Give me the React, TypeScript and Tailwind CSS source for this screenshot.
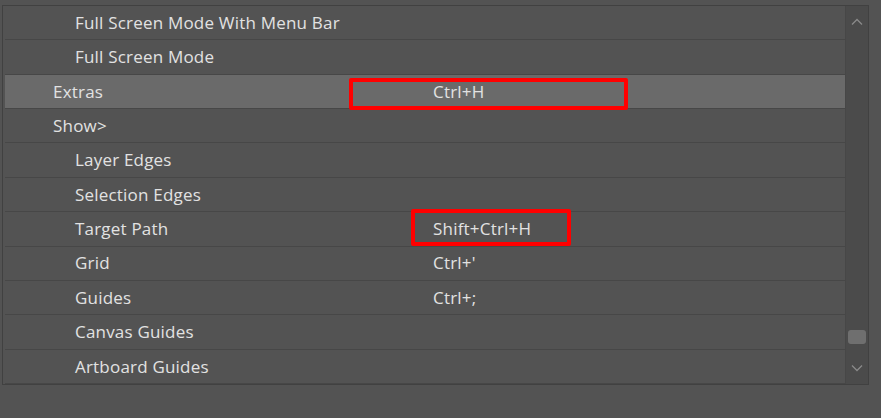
import React from 'react'

type Row = { label: string; shortcut?: string; level: 1 | 2; active?: boolean }

const rows: Row[] = [
    { label: 'Full Screen Mode With Menu Bar', level: 2 },
    { label: 'Full Screen Mode', level: 2 },
    { label: 'Extras', shortcut: 'Ctrl+H', level: 1, active: true },
    { label: 'Show>', level: 1 },
    { label: 'Layer Edges', level: 2 },
    { label: 'Selection Edges', level: 2 },
    { label: 'Target Path', shortcut: 'Shift+Ctrl+H', level: 2 },
    { label: 'Grid', shortcut: "Ctrl+'", level: 2 },
    { label: 'Guides', shortcut: 'Ctrl+;', level: 2 },
    { label: 'Canvas Guides', level: 2 },
    { label: 'Artboard Guides', level: 2 },
]

const App = () => {
    return (
        <div className="relative w-[881px] h-[418px] bg-[#535353] pt-[5px] pl-[2px] font-['Open_Sans',sans-serif] text-[17px] tracking-[0.2px] text-[#e2e2e2]">
            <div className="flex w-[867px] h-[380px] border border-[#414141]">
                <div className="flex-1 flex flex-col pl-[2px]">
                    {rows.map((row) => (
                        <div
                            key={row.label}
                            className={
                                'flex items-center h-[34.4px] border-b border-[#474747] ' +
                                (row.active ? 'bg-[#6a6a6a]' : '')
                            }
                        >
                            <div className={row.level === 1 ? 'w-[428px] pl-[48px]' : 'w-[428px] pl-[70px]'}>
                                {row.label}
                            </div>
                            <div>{row.shortcut}</div>
                        </div>
                    ))}
                </div>
                <div className="w-[23px] bg-[#4b4b4b] border-l border-[#474747] flex flex-col items-center justify-between py-[12px]">
                    <svg width="12" height="8" viewBox="0 0 12 8">
                        <path d="M1 6.5 L6 1.5 L11 6.5" fill="none" stroke="#8a8a8a" strokeWidth="1.3" />
                    </svg>
                    <div className="flex flex-col items-center gap-[20px]">
                        <div className="w-[18px] h-[14px] rounded-[3px] bg-[#6f6f6f]" />
                        <svg width="12" height="8" viewBox="0 0 12 8">
                            <path d="M1 1.5 L6 6.5 L11 1.5" fill="none" stroke="#8a8a8a" strokeWidth="1.3" />
                        </svg>
                    </div>
                </div>
            </div>

            {/* red highlight boxes */}
            <div className="absolute left-[349px] top-[78px] w-[279px] h-[32px] border-[4px] border-[#ff0000] rounded-[2px]" />
            <div className="absolute left-[411px] top-[209px] w-[160px] h-[37px] border-[4px] border-[#ff0000] rounded-[2px]" />
        </div>
    )
}

export default App
